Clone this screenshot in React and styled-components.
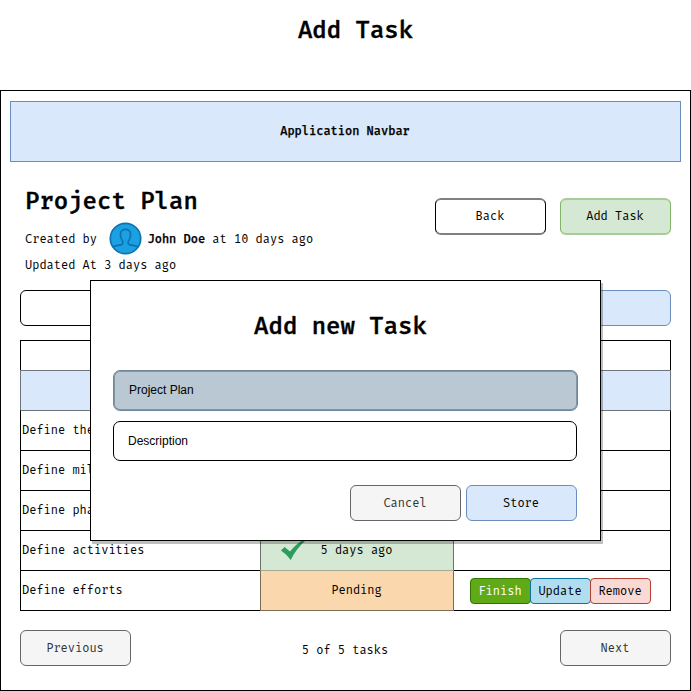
import React from "react";
import styled, { createGlobalStyle } from "styled-components";

const GlobalStyle = createGlobalStyle`
  * { box-sizing: border-box; }
  body { margin: 0; background: #fff; }
`;

const mono = `"Fira Mono", "DejaVu Sans Mono", monospace`;

const Page = styled.div`
  position: relative;
  width: 691px;
  height: 691px;
  display: flex;
  flex-direction: column;
  overflow: hidden;
  font: 12px/16px ${mono};
  color: #000;
`;

const Title = styled.h1`
  margin: 0;
  font: 500 24px/30px ${mono};
  -webkit-text-stroke: 0.4px #000;
  white-space: pre;
`;

const PageTitle = styled(Title)`
  height: 90px;
  padding: 15px 0 0 20px;
  text-align: center;
`;

const Strong = styled.b`
  font-weight: 500;
  -webkit-text-stroke: 0.25px #000;
`;

const Frame = styled.main`
  flex: 1;
  display: flex;
  flex-direction: column;
  border: 1px solid #000;
  padding: 10px 19px 0;
`;

const Navbar = styled.nav`
  height: 61px;
  margin: 0 -10px;
  display: flex;
  align-items: center;
  justify-content: center;
  padding: 0 1px 2px 0;
  border: 1px solid #6c8ebf;
  background: #dae8fc;
`;

const Header = styled.header`
  height: 128px;
  display: flex;
  justify-content: space-between;
`;

const Heading = styled.div`
  display: flex;
  flex-direction: column;
  padding: 24px 0 0 5px;
  white-space: pre;
`;

const Byline = styled.div`
  height: 32px;
  margin-top: 6px;
  display: flex;
  align-items: center;
`;

const BylineText = styled.span`
  padding-top: 2px;
`;

const Avatar = styled.svg`
  width: 33px;
  height: 33px;
  margin: 0 5.5px 0 12px;
`;

const Updated = styled.div`
  margin-top: 3px;
`;

const HeaderActions = styled.div`
  display: flex;
  gap: 14px;
  padding-top: 36px;
`;

const tones = {
  plain: ["#fff", "#000", "#000"],
  green: ["#d5e8d4", "#82b366", "#000"],
  blue: ["#dae8fc", "#6c8ebf", "#000"],
  gray: ["#f5f5f5", "#666", "#333"],
  finish: ["#60a917", "#2d7600", "#fff"],
  update: ["#b1ddf0", "#10739e", "#000"],
  remove: ["#fad9d5", "#ae4132", "#000"],
};

const Button = styled.button`
  width: 111px;
  height: 36px;
  padding: 0 1px 0 0;
  font: 12px/16px ${mono};
  border: 1px solid ${(p) => tones[p.$tone][1]};
  border-radius: 6px;
  background: ${(p) => tones[p.$tone][0]};
  color: ${(p) => tones[p.$tone][2]};
`;

const HeaderButton = styled(Button)`
  height: 37px;
  padding-bottom: 2px;
  border-width: 2px 1px;
  border-top-color: ${(p) => p.$edge};
  border-bottom-color: ${(p) => p.$edge};
`;

const FilterRow = styled.div`
  display: flex;
  justify-content: space-between;
`;

const Filter = styled.div`
  width: ${(p) => p.$width}px;
  height: 36px;
  border: 1px solid ${(p) => tones[p.$tone][1]};
  border-radius: 6px;
  background: ${(p) => tones[p.$tone][0]};
`;

const Table = styled.div`
  margin-top: 14px;
  height: 271px;
  display: flex;
  flex-direction: column;
`;

const Row = styled.div`
  display: grid;
  grid-template-columns: 239px 194px 1fr;
  grid-template-rows: 100%;
  align-items: center;
  height: ${(p) => (p.$short ? 31 : 41)}px;
  margin-bottom: -1px;
  flex: none;
  border: 1px solid #000;
`;

const HeadRow = styled(Row)`
  background: #dae8fc;
  border-color: #6d747e;
`;

const BodyRow = styled(Row)`
  border-top-color: ${(p) => (p.$first ? "#6d747e" : "#000")};
`;

const TaskName = styled.span`
  padding: 0 0 1px 1px;
`;

const Status = styled.div`
  height: 41px;
  display: flex;
  align-items: center;
  justify-content: center;
  gap: 15px;
  margin: -1px 0;
  padding: 0 ${(p) => (p.$done ? 40 : 1)}px 1px 0;
  border: 1px solid ${(p) => (p.$done ? "#6b746a" : "#7d6c57")};
  border-top-color: ${(p) => (p.$done ? "#6b746a" : "#a8aa98")};
  background: ${(p) => (p.$done ? "#d5e8d4" : "#fad7ac")};
`;

const Check = styled.svg`
  width: 24px;
  height: 20px;
  margin-top: -1px;
`;

const RowActions = styled.div`
  display: flex;
  padding-left: 16px;
`;

const SmallButton = styled(Button)`
  width: 61px;
  height: 26px;
  border-radius: 4px;
  & + & { margin-left: -1px; }
`;

const Pager = styled.footer`
  margin-top: 19px;
  display: flex;
  align-items: center;
  justify-content: space-between;
`;

const PageCount = styled.span`
  padding: 3px 1px 0 0;
`;

const Dialog = styled.section`
  position: absolute;
  left: 90px;
  top: 280px;
  width: 511px;
  height: 261px;
  display: flex;
  flex-direction: column;
  padding: 30px 23px 0 22px;
  border: 1px solid #000;
  background: #fff;
  box-shadow: 2px 3px 0 rgba(0, 0, 0, 0.25);
`;

const DialogTitle = styled(Title)`
  width: 455px;
  text-align: center;
`;

const Field = styled.div`
  height: 40px;
  display: flex;
  align-items: center;
  margin-top: 10px;
  padding: 0 14px 1px;
  border: 1px solid #000;
  border-radius: 7px;
  font: 12px/16px "Liberation Sans", Arial, sans-serif;
`;

const SelectedField = styled(Field)`
  width: 465px;
  height: 41px;
  margin-top: 29px;
  padding: 0 15px 2px;
  border-color: #6f8799;
  box-shadow: inset 0 0 0 1px #8297a6;
  background: #bac8d3;
`;

const DialogActions = styled.div`
  display: flex;
  justify-content: flex-end;
  gap: 5px;
  margin-top: 24px;
`;

const tasks = ["Define the scope", "Define milestones", "Define phases"];

export default function App() {
  return (
    <Page>
      <GlobalStyle />
      <PageTitle>Add Task</PageTitle>
      <Frame>
        <Navbar><Strong>Application Navbar</Strong></Navbar>
        <Header>
          <Heading>
            <Title as="h2">Project Plan</Title>
            <Byline>
              <BylineText>Created by</BylineText>
              <Avatar viewBox="0 0 33 33" fill="none" stroke="#0b72b5" strokeWidth="1.7">
                <circle cx="16.5" cy="16.5" r="15.2" fill="#1ba1e2" />
                <path d="M3.5 25C6 23.3 10 23.6 12.6 22.6C14.5 21.8 14.1 19.8 13.1 18.2C10.6 14.5 10.2 7.3 16.5 7.3C22.8 7.3 22.4 14.5 19.9 18.2C18.9 19.8 18.5 21.8 20.4 22.6C23 23.6 27 23.3 29.5 25" />
              </Avatar>
              <BylineText><Strong>John Doe</Strong> at 10 days ago</BylineText>
            </Byline>
            <Updated>Updated At 3 days ago</Updated>
          </Heading>
          <HeaderActions>
            <HeaderButton $tone="plain" $edge="#808080">Back</HeaderButton>
            <HeaderButton $tone="green" $edge="#a8cc96">Add Task</HeaderButton>
          </HeaderActions>
        </Header>
        <FilterRow>
          <Filter $tone="plain" $width={520} />
          <Filter $tone="blue" $width={111} />
        </FilterRow>
        <Table>
          <Row $short />
          <HeadRow />
          {tasks.map((name, i) => (
            <BodyRow key={name} $first={i === 0}>
              <TaskName>{name}</TaskName>
            </BodyRow>
          ))}
          <BodyRow>
            <TaskName>Define activities</TaskName>
            <Status $done>
              <Check viewBox="0 0 24 20">
                <path d="M0 10.6L3.6 7L9 11.5Q15 4 22 0L24 1Q15 9 9.7 20Q5 14 0 10.6Z" fill="#2d9c5e" />
              </Check>
              5 days ago
            </Status>
          </BodyRow>
          <BodyRow>
            <TaskName>Define efforts</TaskName>
            <Status>Pending</Status>
            <RowActions>
              <SmallButton $tone="finish">Finish</SmallButton>
              <SmallButton $tone="update">Update</SmallButton>
              <SmallButton $tone="remove">Remove</SmallButton>
            </RowActions>
          </BodyRow>
        </Table>
        <Pager>
          <Button $tone="gray">Previous</Button>
          <PageCount>5 of 5 tasks</PageCount>
          <Button $tone="gray">Next</Button>
        </Pager>
      </Frame>
      <Dialog role="dialog">
        <DialogTitle as="h2">Add new Task</DialogTitle>
        <SelectedField>Project Plan</SelectedField>
        <Field>Description</Field>
        <DialogActions>
          <Button $tone="gray">Cancel</Button>
          <Button $tone="blue">Store</Button>
        </DialogActions>
      </Dialog>
    </Page>
  );
}
